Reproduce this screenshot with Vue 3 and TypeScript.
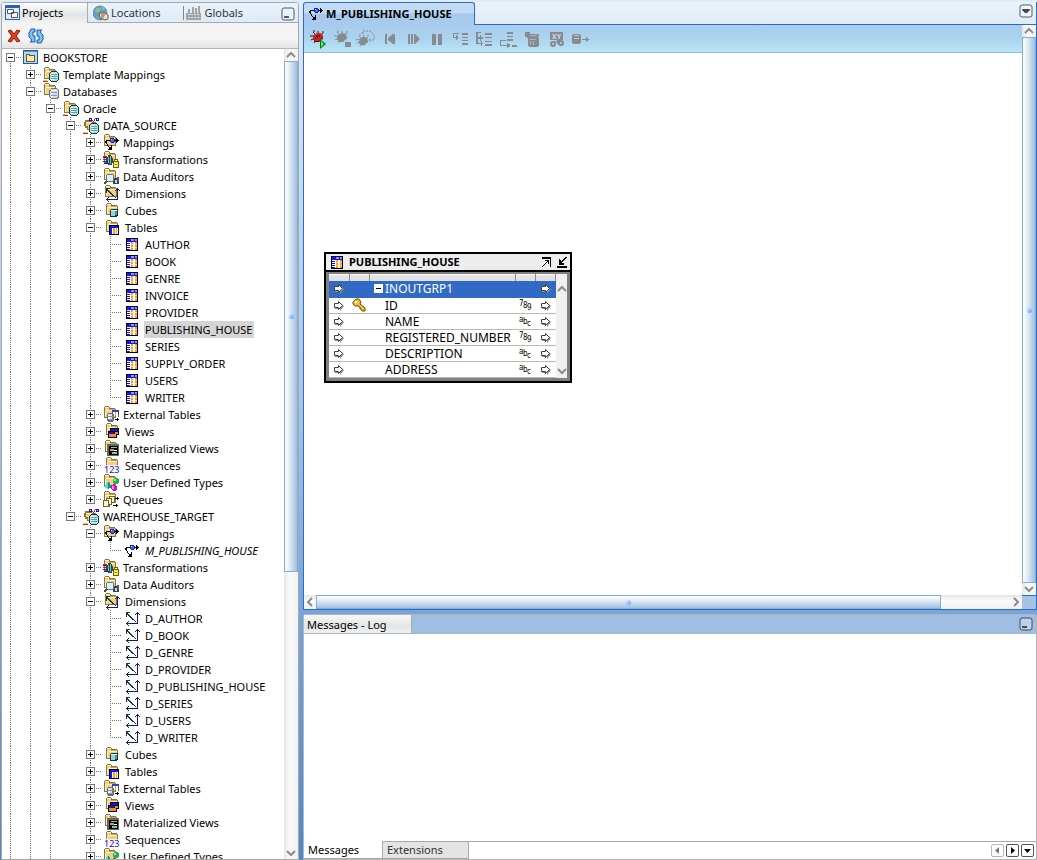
<script setup lang="ts">
import { computed, reactive, ref } from 'vue'

interface TreeNode {
  label: string
  icon: string
  children?: TreeNode[]
  open?: boolean
  more?: boolean
  narrow?: boolean
  italic?: boolean
}

interface TreeRow {
  key: string
  node: TreeNode
  guides: boolean[]
  first: boolean
  continues: boolean
}

const tableNames = ['AUTHOR', 'BOOK', 'GENRE', 'INVOICE', 'PROVIDER', 'PUBLISHING_HOUSE', 'SERIES', 'SUPPLY_ORDER', 'USERS', 'WRITER']
const dimensionNames = ['D_AUTHOR', 'D_BOOK', 'D_GENRE', 'D_PROVIDER', 'D_PUBLISHING_HOUSE', 'D_SERIES', 'D_USERS', 'D_WRITER']

function moduleFolders(mappings: string[], dimensions: string[], tables: string[]): TreeNode[] {
  return [
    { label: 'Mappings', icon: 'mappings', open: mappings.length > 0, children: mappings.map((label) => ({ label, icon: 'mapping', narrow: true, italic: true })) },
    { label: 'Transformations', icon: 'transformations', children: [] },
    { label: 'Data Auditors', icon: 'auditors', children: [] },
    { label: 'Dimensions', icon: 'dimensions', narrow: true, open: dimensions.length > 0, children: dimensions.map((label) => ({ label, icon: 'dimension', narrow: true })) },
    { label: 'Cubes', icon: 'cubes', narrow: true, children: [] },
    { label: 'Tables', icon: 'tables', narrow: true, open: tables.length > 0, children: tables.map((label) => ({ label, icon: 'table', narrow: true })) },
    { label: 'External Tables', icon: 'external', children: [] },
    { label: 'Views', icon: 'views', narrow: true, children: [] },
    { label: 'Materialized Views', icon: 'matviews', children: [] },
    { label: 'Sequences', icon: 'sequences', narrow: true, children: [] },
    { label: 'User Defined Types', icon: 'types', children: [] },
    { label: 'Queues', icon: 'queues', children: [] },
  ]
}

const projects = reactive<TreeNode[]>([
  {
    label: 'BOOKSTORE', icon: 'project', open: true, more: true,
    children: [
      { label: 'Template Mappings', icon: 'templates', children: [] },
      {
        label: 'Databases', icon: 'databases', open: true, more: true,
        children: [
          {
            label: 'Oracle', icon: 'templates', open: true, more: true,
            children: [
              { label: 'DATA_SOURCE', icon: 'module', open: true, children: moduleFolders([], [], tableNames) },
              { label: 'WAREHOUSE_TARGET', icon: 'module', open: true, children: moduleFolders(['M_PUBLISHING_HOUSE'], dimensionNames, []) },
            ],
          },
        ],
      },
    ],
  },
])

function flatten(nodes: TreeNode[], guides: boolean[], path: string): TreeRow[] {
  return nodes.flatMap((node, index) => {
    const continues = index < nodes.length - 1 || !!node.more
    const key = `${path}/${node.label}`
    const row: TreeRow = { key, node, guides, first: index === 0 && guides.length === 0, continues }
    const below = node.open && node.children ? flatten(node.children, [...guides, continues], key) : []
    return [row, ...below]
  })
}

const rows = computed(() => flatten(projects, [], ''))
const selected = ref('/BOOKSTORE/Databases/Oracle/DATA_SOURCE/Tables/PUBLISHING_HOUSE')

const debugTools = [
  { icon: 'debug', label: 'Start debug' },
  { icon: 'stop', label: 'Stop debug' },
  { icon: 'restart', label: 'Reinitialize' },
  { icon: 'rewind', label: 'Reset' },
  { icon: 'resume', label: 'Resume' },
  { icon: 'pause', label: 'Pause' },
  { icon: 'stepinto', label: 'Step' },
  { icon: 'stepover', label: 'Step row' },
  { icon: 'stepend', label: 'Step to end' },
  { icon: 'testdata', label: 'Test data' },
  { icon: 'watch', label: 'Watch' },
  { icon: 'output', label: 'Output' },
]

const attributes = [
  { name: 'ID', type: '789', key: true },
  { name: 'NAME', type: 'abc', key: false },
  { name: 'REGISTERED_NUMBER', type: '789', key: false },
  { name: 'DESCRIPTION', type: 'abc', key: false },
  { name: 'ADDRESS', type: 'abc', key: false },
]
</script>

<template>
  <div class="workbench">
    <svg class="sprite" aria-hidden="true">
      <symbol id="folder" viewBox="0 0 14 13">
        <path fill="#8c7434" d="M2 0h4v1h1v1h5v1h1v9H1V1h1z" />
        <path fill="#f4cf83" d="M2 2h4v1h6v8H2z" />
        <path fill="#fff3cc" d="M2 1h4v1H2zM3 4h9v1H3zM2 5h1v6H2z" />
        <path fill="#c9a050" d="M6 3h6v1H6z" />
      </symbol>
      <symbol id="cylinder" viewBox="0 0 10 11">
        <path fill="#17373b" d="M2 0h6v1h1v1h1v7H9v1H8v1H2v-1H1V9H0V2h1V1h1z" />
        <path fill="#a9e6e2" d="M2 1h6v1h1v7H8v1H2V9H1V2h1z" />
        <path fill="#effffe" d="M2 2h4v1H2zM2 4h3v1H2zM2 6h3v1H2zM2 8h3v1H2z" />
        <path fill="#5aa3a6" d="M2 3h6v1H2zM2 5h6v1H2zM2 7h6v1H2z" />
      </symbol>
      <symbol id="grid" viewBox="0 0 12 13">
        <path fill="#000" d="M0 0h12v13H0z" />
        <path fill="#1414ff" d="M1 1h3v3H1z" />
        <path fill="#8c94ff" d="M5 1h3v2H5zM9 1h2v2H9z" />
        <path fill="#1414ff" d="M4 1h1v3H4zM8 1h1v3H8zM5 3h6v1H5z" />
        <path fill="#fff" d="M1 4h10v8H1z" />
        <path fill="#1414ff" d="M1 5h3v1H1zM1 7h3v1H1zM1 9h3v1H1zM1 11h3v1H1z" />
        <path fill="#ff9a1f" d="M5 4h2v8H5zM9 4h2v8H9z" />
        <path fill="#ffd596" d="M5 6h2v1H5zM5 9h2v1H5zM9 6h2v1H9zM9 9h2v1H9z" />
      </symbol>
      <symbol id="flow" viewBox="0 0 15 14">
        <path fill="#000" d="M1 3h4v1H1zM0 4h2v2H0zM1 6h1v1H1zM2 7h1v2H2zM3 9h1v1H3zM4 10h1v1H4zM6 8h1v5H3v-1h1v-1h1v-1h1zM9 3h2V1h1v1h1v1h1v1h-1v1h-1v1h-1V4H9z" />
        <path fill="#0b23b8" d="M5 1h4v1h1v3H9v1H6V5H5z" />
        <path fill="#3c62ff" d="M6 2h3v3H6z" /><path fill="#e4eaff" d="M6 2h1v1H6z" />
      </symbol>
      <symbol id="axes" viewBox="0 0 15 15">
        <path fill="#12128c" d="M12 1h1v12H1v-1h11zM11 2h3v1h-3zM10 3h1v1h-1zM14 3h1v1h-1zM2 11h1v3H2zM3 10h1v1H3zM3 14h1v1H3z" />
        <path fill="#103c3c" d="M1 1h4v1H3v1h1v1h1v1h1v1h1v1h1v1h1v1h1v1h1v1h-1v-1H9v-1H8V9H7V8H6V7H5V6H4V5H3V4H2v2H1z" />
      </symbol>
      <symbol id="bug" viewBox="0 0 15 15">
        <path fill="none" stroke="currentColor" d="M3 2l3 3M8 1v4M0 6h4M1 10l4-2M4 13l2-3M9 12l-1-3M13 9l-4-2M13 3l-3 3M3 1h2M12 2h2" />
        <path fill="currentColor" d="M4 5l4-2 4 1 1 4-4 4H5L3 9z" />
      </symbol>

      <symbol id="project" viewBox="0 0 17 17">
        <path fill="#1f58ad" d="M0 1h15v14H0z" /><path fill="#b9d5f8" d="M1 3h13v11H1z" /><path fill="#5b93e4" d="M1 2h13v1H1z" />
        <path fill="#6a5a20" d="M3 5h4v1h5v7H3z" /><path fill="#ffeb9a" d="M4 6h2v1h5v5H4z" />
      </symbol>
      <symbol id="templates" viewBox="0 0 17 17">
        <use href="#folder" x="0" y="1" width="14" height="13" /><use href="#cylinder" x="6" y="5" width="10" height="11" />
        <path fill="#fff" d="M0 13h5v3H0z" /><path fill="#e0104c" d="M0 15h5v1H0z" /><path fill="#ffcf22" d="M0 14h4v1H0z" />
      </symbol>
      <symbol id="databases" viewBox="0 0 17 17">
        <use href="#folder" x="0" y="0" width="14" height="13" />
        <path fill="#66707a" d="M8 5h6v1h1v1h1v8h-1v1H8v-1H7v-1H6V7h2z" /><path fill="#d6dee8" d="M8 6h6v1h1v7h-1v1H8v-1H7V8h1z" />
        <path fill="#fff" d="M8 7h4v1H8zM8 10h2v1H8zM8 13h2v1H8z" /><path fill="#8796a8" d="M8 9h6v1H8zM8 12h6v1H8z" />
      </symbol>
      <symbol id="module" viewBox="0 0 17 17">
        <path fill="#8c7434" d="M2 3h7v2h4v4H9v4H4v-2H2V9H1V5h1z" /><path fill="#f4cf83" d="M3 5h6v4H7v3H5V9H3z" /><path fill="#fff3cc" d="M3 5h5v1H3z" />
        <path fill="#1010d0" d="M6 1h3v3H6zM13 1h3v3h-3z" /><path fill="#fff" d="M7 2h1v1H7zM14 2h1v1h-1z" /><path fill="#d81030" d="M9 3h1v1H9zM10 4h1v2h-1zM11 2h1v2h-1zM12 1h1v1h-1z" />
        <use href="#cylinder" x="6" y="6" width="10" height="11" />
        <path fill="#e0104c" d="M0 16h5v1H0z" /><path fill="#ffcf22" d="M0 15h5v1H0z" />
      </symbol>
      <symbol id="mappings" viewBox="0 0 17 17">
        <use href="#folder" x="0" y="0" width="14" height="13" /><use href="#flow" x="2" y="3" width="15" height="14" />
      </symbol>
      <symbol id="transformations" viewBox="0 0 17 17">
        <use href="#folder" x="0" y="0" width="14" height="13" />
        <path fill="#d41a2a" d="M0 5h4v1H0zM0 8h4v1H0z" /><path fill="#1515c8" d="M0 6h4v1H0zM0 10h4v1H0zM1 12h4v1H1z" />
        <path fill="#24484c" d="M5 4h3v1h1v2h1v5H9v2H5v-2H3V6h2z" /><path fill="#7fbcbc" d="M5 6h1v6H5zM7 5h1v8H7z" />
        <path fill="#6a5c10" d="M11 8h4v2h1v7h-6v-7h1z" /><path fill="#fff" d="M12 9h2v1h-2z" /><path fill="#ffee3a" d="M11 11h4v5h-4z" /><path fill="#8a7600" d="M12 13h2v1h-2z" />
      </symbol>
      <symbol id="auditors" viewBox="0 0 17 17">
        <use href="#folder" x="0" y="0" width="14" height="13" />
        <path fill="#35424c" d="M10 10h6v6h-6z" /><path fill="#c7d4dc" d="M12 12h2v3h-2z" /><path fill="#4a4f8c" d="M14 9h2v5h-2z" />
        <circle cx="7" cy="10" r="4" fill="#d6f3fb" stroke="#68757c" /><path stroke="#4b4b4b" stroke-width="2" d="M4 13l-3 3" />
      </symbol>
      <symbol id="dimensions" viewBox="0 0 17 17">
        <use href="#folder" x="1" y="0" width="14" height="13" /><use href="#axes" x="2" y="2" width="15" height="15" />
      </symbol>
      <symbol id="cubes" viewBox="0 0 17 17">
        <use href="#folder" x="2" y="1" width="14" height="13" />
        <path fill="#14343a" d="M8 7h7v7h-1v1H7V8h1z" /><path fill="#8ed6d8" d="M8 9h4v5H8z" /><path fill="#e0ffff" d="M8 8h6v1H8z" /><path fill="#4b9aa0" d="M12 9h2v4h-2z" />
      </symbol>
      <symbol id="tables" viewBox="0 0 17 17">
        <use href="#folder" x="2" y="1" width="14" height="13" /><path d="M6 6h10v10H6z" />
        <path fill="#1414ff" d="M7 7h8v2H7zM7 9h2v6H7z" /><path fill="#fff" d="M9 9h6v6H9z" /><path fill="#ff9a1f" d="M10 9h2v6h-2zM13 9h1v6h-1z" />
      </symbol>
      <symbol id="external" viewBox="0 0 17 17">
        <use href="#folder" x="0" y="0" width="14" height="13" />
        <path fill="#fff" d="M10 4h6v6h-6z" /><path fill="#2848b8" d="M9 4h7v2H9zM9 6h1v4H9z" /><path fill="#f0a030" d="M12 6h1v4h-1z" /><path fill="#555" d="M15 6h1v5h-1z" />
        <path fill="#66707a" d="M5 7h5v1h1v7h-1v1H5v-1H4V8h1z" /><path fill="#d6dee8" d="M5 8h4v6H5z" /><path fill="#fff" d="M5 9h2v5H5z" /><path fill="#8796a8" d="M5 10h5v1H5zM5 13h5v1H5z" />
        <path d="M12 13h2v-1h1v1h1v1h-1v1h-1v-1h-2z" />
      </symbol>
      <symbol id="views" viewBox="0 0 17 17">
        <use href="#folder" x="2" y="0" width="14" height="13" />
        <path d="M7 5h9v7h-2v3H5V8h2z" /><path fill="#1414e8" d="M8 6h7v2H8z" /><path fill="#ff8a10" d="M12 9h3v2h-3z" /><path fill="#1414e8" d="M6 9h5v2H6z" /><path fill="#ff8a10" d="M6 11h7v3H6z" />
      </symbol>
      <symbol id="matviews" viewBox="0 0 17 17">
        <use href="#folder" x="1" y="0" width="14" height="13" />
        <path fill="#666" d="M4 4h12v12H4z" /><path d="M6 6h9v9H6z" /><path fill="#56d6cf" d="M8 7h6v1H8zM9 12h5v2H9z" /><path fill="#ff8a10" d="M7 9h4v2H7z" /><path fill="#fff" d="M11 10h3v1h-3z" />
      </symbol>
      <symbol id="sequences" viewBox="0 0 17 17">
        <use href="#folder" x="2" y="0" width="14" height="13" /><path fill="#fff" fill-opacity=".8" d="M1 8h15v8H1z" />
      </symbol>
      <symbol id="types" viewBox="0 0 17 17">
        <use href="#folder" x="0" y="0" width="14" height="13" />
        <path fill="#0a8f8c" d="M5 7l4 6-4 2-4-2z" /><path fill="#3fe2da" d="M5 7v8l-4-2z" />
        <circle cx="13" cy="7" r="3" fill="#24b04c" /><path fill="#96f0a4" d="M11 5h2v2h-2z" /><path fill="#c818b4" d="M8 11l3-1 3 2v4l-3 1-3-2z" /><path fill="#ff8af0" d="M9 12h2v3H9z" />
      </symbol>
      <symbol id="queues" viewBox="0 0 17 17">
        <use href="#folder" x="0" y="0" width="14" height="13" />
        <path fill="#6b6236" d="M6 5h6v7h-3v2H7v2H0V9h3V7h3z" /><path fill="#fff7cf" d="M7 6h4v5H9V7H7zM4 8h4v5H6V9H4zM1 10h4v5H1z" />
        <path d="M12 7h2V6h1v1h1v1h-1v1h-1V8h-2zM10 14h3v-1h1v1h1v1h-1v1h-1v-1h-3z" />
      </symbol>
      <symbol id="table" viewBox="0 0 17 17"><use href="#grid" x="3" y="2" width="12" height="13" /></symbol>
      <symbol id="mapping" viewBox="0 0 17 17"><use href="#flow" x="2" y="2" width="15" height="14" /></symbol>
      <symbol id="dimension" viewBox="0 0 17 17"><use href="#axes" x="2" y="1" width="15" height="15" /></symbol>

      <symbol id="debug" viewBox="0 0 20 20">
        <g color="#1c1c1c"><use href="#bug" x="2" y="1" width="15" height="15" /></g>
        <path fill="#e81818" d="M6 6l4-2 4 1 1 3-4 4H7L5 10z" /><path d="M8 6h1v1h1v2H9V8H8zM11 6h1v2h-1zM7 9h1v1H7z" />
        <path fill="#0a7a12" d="M12 10l6 5-6 5z" /><path fill="#5df060" d="M13 12l3 3-3 3z" />
      </symbol>
      <symbol id="stop" viewBox="0 0 20 20"><use href="#bug" x="2" y="1" width="15" height="15" /><path fill="currentColor" d="M13 13h6v5h-6z" /></symbol>
      <symbol id="restart" viewBox="0 0 20 20"><use href="#bug" x="0" y="5" width="14" height="14" /><path fill="none" stroke="currentColor" stroke-dasharray="2 1" d="M7 5V2h7l4 4v5h-5M7 5l-2-2M13 11l2-2M13 11l2 2" /></symbol>
      <symbol id="rewind" viewBox="0 0 20 20"><path fill="currentColor" d="M5 5h2v10H5zM15 5v10H13L8 11V9l5-4z" /></symbol>
      <symbol id="resume" viewBox="0 0 20 20"><path fill="currentColor" d="M4 5h2v10H4zM7 5h2v10H7zM10 5h1l5 5-5 5h-1z" /></symbol>
      <symbol id="pause" viewBox="0 0 20 20"><path fill="currentColor" d="M4 5h4v11H4zM10 5h4v11h-4z" /></symbol>
      <symbol id="stepinto" viewBox="0 0 20 20"><path fill="currentColor" d="M1 4h6v1H1zM1 5h1v4H1zM1 8h5v1H1zM4 6h1v5H4zM5 7h1v3H5zM10 4h6v2h-6zM10 8h6v1h-6zM10 11h6v1h-6zM10 14h6v2h-6z" /></symbol>
      <symbol id="stepover" viewBox="0 0 20 20"><path fill="currentColor" d="M0 3h5v1H0zM0 3h2v12H0zM1 8h6v2H1zM1 14h6v1H1zM4 6h1v6H4zM5 12h1v5H5zM9 4h7v2H9zM9 8h7v1H9zM9 12h7v1H9zM9 15h7v2H9z" /></symbol>
      <symbol id="stepend" viewBox="0 0 20 20"><path fill="currentColor" d="M7 3h6v2H7zM7 7h6v1H7zM7 10h6v2H7zM0 11h6v1H0zM0 11h1v6H0zM0 16h9v1H0zM7 14h1v5H7zM8 15h2v3H8zM12 16h5v2h-5z" /></symbol>
      <symbol id="testdata" viewBox="0 0 20 20"><path fill="currentColor" d="M1 3h5v2h9v3h-1v1h1v8h-1v1H5v-1H4V9H3V8H1z" /><path fill="#a9b4bd" d="M6 6h7v1H6zM6 10h6v1H6zM6 12h1v4H6zM9 12h1v4H9z" /></symbol>
      <symbol id="watch" viewBox="0 0 20 20"><path fill="currentColor" d="M2 3h13v8H2zM9 11h3v2h-1v2H9v-2H7v-1h2z" /><circle cx="5" cy="15" r="2" fill="none" stroke="currentColor" stroke-width="2" /><circle cx="13" cy="14" r="2" fill="none" stroke="currentColor" stroke-width="2" /></symbol>
      <symbol id="output" viewBox="0 0 20 20"><path fill="currentColor" d="M1 5h7v1h1v8H8v1H1v-1H0V6h1zM10 10h4V8h1v1h1v1h1v1h-1v1h-1v1h-1v-2h-4z" /><path fill="#b9cbd9" d="M2 6h5v1H2zM2 9h5v1H2z" /></symbol>
      <symbol id="port" viewBox="0 0 12 11"><path fill="#909090" d="M2 4h4V2l5 4-4 5V9H2z" /><path fill="#fff" stroke="#404040" d="M1.500 3.500h4v-2l4 4-4 4v-2h-4z" /></symbol>
      <symbol id="chevron" viewBox="0 0 10 10"><path fill="none" stroke="#8c8c8c" stroke-width="2" d="M1 7l4-4 4 4" /></symbol>
      <symbol id="minimize" viewBox="0 0 14 14"><rect x="1" y="1" width="12" height="12" rx="2" fill="#fff" fill-opacity=".3" stroke="currentColor" /><path fill="currentColor" d="M3 9h5v2H3z" /></symbol>
    </svg>

    <aside class="navigator">
      <nav class="nav-tabs">
        <button class="nav-tab active" type="button">
          <svg class="tab-icon" viewBox="0 0 16 16"><path fill="#2a62b4" d="M0 0h15v15H0z" /><path fill="#dfeafb" d="M1 3h13v11H1z" /><path fill="#fff" stroke="#555" d="M2.500 4.500h6v4h-6zM6.500 7.500h6v5h-6z" /></svg>
          Projects
        </button>
        <button class="nav-tab" type="button">
          <svg class="tab-icon" viewBox="0 0 16 16"><circle cx="7" cy="8" r="7" fill="#5c9ccf" stroke="#6d8ca8" /><path fill="#8cbc8c" d="M3 3h5l-1 4-3 1-2-2zM8 1l4 2-2 3zM3 11l3 1v2z" /><path fill="#f6ddc4" stroke="#765844" d="M6 8h6l3 2v4l-3 1-5-2z" /><path stroke="#765844" d="M8 10h4M8 12h3" /></svg>
          Locations
        </button>
        <button class="nav-tab globals" type="button">
          <svg class="tab-icon" viewBox="0 0 16 16"><path fill="#a4a4a4" d="M2 4h2v4H2zM6 2h2v6H6zM9 3h2v5H9zM12 1h2v7h-2zM0 8h15v7H0z" /><path fill="#e4e4e4" d="M2 9h2v1H2zM5 9h2v1H5zM8 9h2v1H8zM11 9h2v1h-2zM2 12h2v1H2zM5 12h2v1H5zM8 12h2v1H8zM11 12h2v1h-2z" /></svg>
          Globals
        </button>
        <button class="window-btn" type="button" aria-label="Minimize navigator"><svg><use href="#minimize" /></svg></button>
      </nav>
      <div class="nav-tools">
        <button type="button" aria-label="Delete"><svg viewBox="0 0 16 16"><path fill="#e8401f" stroke="#8e1a08" d="M2 3l3-1 3 4 3-4 3 1-4 5 4 5-3 1-3-4-3 4-3-1 4-5z" /></svg></button>
        <button type="button" aria-label="Refresh"><svg viewBox="0 0 16 16"><path fill="#7fc0f6" stroke="#175ca8" d="M1 5l2-4h4v3H5v4h2v6H2l2-2-3-3zM15 11l-2 4H9v-3h2V8H9V2h5l-2 2 3 3z" /></svg></button>
      </div>
      <div class="tree-area">
        <div class="tree" role="tree">
          <div v-for="row in rows" :key="row.key" class="tree-row" role="treeitem" :aria-level="row.guides.length + 1">
            <span v-for="(line, level) in row.guides" :key="level" class="cell"><i v-if="line" class="rail" /></span>
            <span class="cell">
              <i class="rail" :class="{ top: !row.continues, bottom: row.first }" />
              <i class="dash" />
              <button
                v-if="row.node.children"
                class="toggle"
                :class="{ open: row.node.open }"
                type="button"
                :aria-label="row.node.label"
                :aria-expanded="!!row.node.open"
                @click="row.node.open = !row.node.open"
              />
            </span>
            <svg class="node-icon" shape-rendering="crispEdges">
              <use :href="`#${row.node.icon}`" />
              <text v-if="row.node.icon === 'sequences'" class="digits" x="1" y="16">123</text>
            </svg>
            <span
              class="node-label"
              :class="{ narrow: row.node.narrow, italic: row.node.italic, selected: row.key === selected }"
              @click="selected = row.key"
            >{{ row.node.label }}</span>
          </div>
        </div>
        <div class="scroll vertical">
          <button type="button" aria-label="Scroll up"><svg><use href="#chevron" /></svg></button>
          <div class="track"><div class="thumb tree-thumb"><i class="grip" /></div></div>
          <button type="button" aria-label="Scroll down"><svg class="down"><use href="#chevron" /></svg></button>
        </div>
      </div>
    </aside>

    <main class="workspace">
      <section class="editor">
        <header class="editor-tabs">
          <button class="editor-tab" type="button"><svg shape-rendering="crispEdges"><use href="#flow" /></svg>M_PUBLISHING_HOUSE</button>
          <div class="tab-rest">
            <button class="window-btn" type="button" aria-label="Open documents">
              <svg viewBox="0 0 14 14"><rect x="1" y="1" width="12" height="12" rx="2" fill="#fff" fill-opacity=".5" stroke="#555b64" /><path fill="#45484e" d="M3 5h8v1l-3 3H6L3 6z" /></svg>
            </button>
          </div>
        </header>
        <div class="editor-body">
          <div class="editor-view">
            <div class="debug-bar">
              <button v-for="tool in debugTools" :key="tool.icon" type="button" :aria-label="tool.label">
                <svg>
                  <use :href="`#${tool.icon}`" />
                  <text v-if="tool.icon === 'watch'" class="xy" x="4" y="10">XY</text>
                </svg>
              </button>
            </div>
            <div class="canvas">
              <article class="operator">
                <header class="operator-title">
                  <svg class="grid-icon" shape-rendering="crispEdges"><use href="#grid" /></svg>
                  <h2>PUBLISHING_HOUSE</h2>
                  <button type="button" aria-label="Maximize"><svg viewBox="0 0 12 12" shape-rendering="crispEdges"><path d="M1 1h9v10H9V3H1zM4 4h4v4H7V6H6v1H5v1H4v1H3v1H2v1H1v-1h1V9h1V8h1V7h1V6h1V5H4z" /></svg></button>
                  <button type="button" aria-label="Restore"><svg viewBox="0 0 12 12" shape-rendering="crispEdges"><path d="M1 10h10v2H1zM3 3h1v1h1v1h1V4h1V3h1V2h1V1h2v1h-1v1H9v1H8v1H7v1H6v1h2v2H3z" /></svg></button>
                </header>
                <div class="operator-body">
                  <table>
                    <colgroup><col class="c-port"><col class="c-key"><col><col class="c-type"><col class="c-port"></colgroup>
                    <thead><tr><th /><th /><th /><th /><th /></tr></thead>
                    <tbody>
                      <tr class="group">
                        <td><svg class="port"><use href="#port" /></svg></td>
                        <td />
                        <td class="name"><button class="group-toggle" type="button" aria-label="Collapse group" />INOUTGRP1</td>
                        <td />
                        <td><svg class="port"><use href="#port" /></svg></td>
                      </tr>
                      <tr v-for="attr in attributes" :key="attr.name">
                        <td><svg class="port"><use href="#port" /></svg></td>
                        <td>
                          <svg v-if="attr.key" class="key" viewBox="0 0 14 14"><path fill="#f2c230" stroke="#6b4a08" d="M1 4l3-3h3l2 3-1 2 5 4v3h-3l-1-2H8V9L6 8H3L1 6z" /><path fill="#fff" d="M3 3h2v2H3z" /></svg>
                        </td>
                        <td class="name">{{ attr.name }}</td>
                        <td>
                          <svg class="type" viewBox="0 0 13 12"><text x="0" y="7">{{ attr.type[0] }}</text><text x="4" y="9">{{ attr.type[1] }}</text><text x="8" y="11">{{ attr.type[2] }}</text></svg>
                        </td>
                        <td><svg class="port"><use href="#port" /></svg></td>
                      </tr>
                    </tbody>
                  </table>
                  <div class="operator-scroll"><svg><use href="#chevron" /></svg><svg class="down"><use href="#chevron" /></svg></div>
                </div>
              </article>
            </div>
          </div>
          <div class="scroll vertical">
            <button type="button" aria-label="Scroll up"><svg><use href="#chevron" /></svg></button>
            <div class="track"><div class="thumb full"><i class="grip" /></div></div>
            <button type="button" aria-label="Scroll down"><svg class="down"><use href="#chevron" /></svg></button>
          </div>
          <div class="scroll horizontal">
            <button type="button" aria-label="Scroll left"><svg class="left"><use href="#chevron" /></svg></button>
            <div class="track"><div class="thumb wide"><i class="grip" /></div></div>
            <button type="button" aria-label="Scroll right"><svg class="right"><use href="#chevron" /></svg></button>
          </div>
          <div class="corner" />
        </div>
      </section>

      <section class="messages">
        <header class="messages-head">
          <h2>Messages - Log</h2>
          <button class="window-btn" type="button" aria-label="Minimize messages"><svg><use href="#minimize" /></svg></button>
        </header>
        <div class="log" />
        <footer class="log-tabs">
          <button class="log-tab current" type="button">Messages</button>
          <button class="log-tab" type="button">Extensions</button>
          <div class="pager">
            <button type="button" aria-label="Previous tab"><svg viewBox="0 0 11 11"><path fill="#777" d="M7 2v7L3 5.500z" /></svg></button>
            <button class="on" type="button" aria-label="Next tab"><svg viewBox="0 0 11 11"><path d="M4 2v7l4-3.500z" /></svg></button>
            <button class="on" type="button" aria-label="Tab list"><svg viewBox="0 0 11 11"><path d="M2 4h7L5.500 8z" /></svg></button>
          </div>
        </footer>
      </section>
    </main>
  </div>
</template>

<style>
html, body { margin: 0; height: 100%; overflow: hidden; }
</style>

<style scoped>
.workbench, .workbench * { box-sizing: border-box; }
.workbench {
  display: grid;
  grid-template-columns: 298px minmax(0, 1fr);
  gap: 4px;
  height: 100vh;
  padding: 2px 0 0 1px;
  background: linear-gradient(#e0ebfa, #a8c6ea 45%, #78a6da 70%, #4f88c8);
  color: #000;
  font: 11px/16px "Noto Sans", sans-serif;
}
.sprite { position: absolute; width: 0; height: 0; }
button { margin: 0; padding: 0; border: 0; background: none; color: inherit; font: inherit; }
svg { display: block; flex: none; }
h2 { margin: 0; font-size: 11px; line-height: 16px; }

.navigator { display: flex; flex-direction: column; min-height: 0; border: 1px solid #a9a9a9; border-radius: 3px 3px 0 0; background: #fff; overflow: hidden; }
.nav-tabs { display: flex; flex: none; height: 20px; background: linear-gradient(#e9f3fb, #dcebf8); }
.nav-tab { display: flex; align-items: center; gap: 2px; padding: 0 5px; border-bottom: 1px solid #aaa; color: #333; }
.nav-tab.active { width: 86px; padding-left: 3px; gap: 1px; border-right: 1px solid #aaa; border-bottom: 0; background: linear-gradient(#fdfdfd, #e2e5e5 60%, #f2f2f2); color: #000; }
.nav-tab.globals { flex: 1; margin-left: 0; padding-left: 18px; }
.nav-tab.globals::before { content: ""; width: 1px; height: 14px; background: #888; }
.tab-icon { width: 16px; height: 16px; }
.nav-tabs .window-btn { padding: 2px 3px 0 0; border-bottom: 1px solid #aaa; color: #555b64; }
.window-btn svg { width: 14px; height: 14px; }
.nav-tools { display: flex; flex: none; align-items: center; gap: 6px; height: 26px; padding: 0 4px; border-bottom: 1px solid #b5b5b5; background: linear-gradient(#f3f3f3, #f5f5f5 60%, #e4e4e4); }
.nav-tools svg { width: 16px; height: 16px; }

.tree-area { display: flex; flex: 1; min-height: 0; }
.tree { flex: 1; min-width: 0; overflow: hidden; }
.tree-row { display: flex; height: 17px; white-space: nowrap; }
.cell { position: relative; flex: none; width: 20px; }
.rail { position: absolute; top: 0; bottom: 0; left: 8px; width: 1px; background: repeating-linear-gradient(#777 0 1px, transparent 1px 2px); }
.rail.top { bottom: 8px; }
.rail.bottom { top: 8px; }
.dash { position: absolute; top: 8px; left: 8px; right: 0; height: 1px; background: repeating-linear-gradient(90deg, #777 0 1px, transparent 1px 2px); }
.toggle { position: absolute; top: 4px; left: 4px; width: 9px; height: 9px; border: 1px solid #777; background: linear-gradient(#000, #000) center / 5px 1px no-repeat, linear-gradient(#000, #000) center / 1px 5px no-repeat, #fff; }
.toggle.open { background: linear-gradient(#000, #000) center / 5px 1px no-repeat, #fff; }
.node-icon { width: 17px; height: 17px; margin-left: 1px; overflow: visible; }
.digits { fill: #1010d8; font: 9px "Noto Sans", sans-serif; }
.node-label { margin-left: 2px; padding: 0 2px 0 1px; line-height: 17px; cursor: default; }
.node-label.narrow { margin-left: 4px; }
.node-label.italic { font-style: italic; }
.node-label.selected { background: #d5d5d5; }

.scroll { display: flex; background: #f4f4f4; }
.scroll.vertical { flex-direction: column; width: 14px; background: linear-gradient(90deg, #e6e6e6, #fafafa 40%, #f1f1f1); }
.scroll.horizontal { height: 14px; background: linear-gradient(#e6e6e6, #fafafa 40%, #f1f1f1); }
.scroll button { display: grid; place-items: center; flex: none; width: 12px; height: 12px; }
.scroll.vertical button { width: 13px; }
.scroll.horizontal button { height: 13px; }
.scroll svg, .operator-scroll svg { width: 10px; height: 10px; }
.down { transform: rotate(180deg); }
.left { transform: rotate(-90deg); }
.right { transform: rotate(90deg); }
.track { display: flex; flex: 1; min-width: 0; min-height: 0; }
.thumb { display: grid; place-items: center; border: 1px solid #83acd8; }
.vertical .track { flex-direction: column; }
.vertical .thumb { width: 14px; background: linear-gradient(90deg, #fff, #e4edf5 35%, #9fc0e0); }
.horizontal .thumb { height: 14px; background: linear-gradient(#fff, #e4edf5 35%, #9fc0e0); }
.tree-thumb { height: 65%; }
.thumb.full { height: 100%; }
.thumb.wide { width: 90%; }
.grip { width: 5px; height: 5px; border-radius: 50%; background: linear-gradient(135deg, #d6e8ff, #629cf4); }

.workspace { display: grid; grid-template-rows: minmax(0, 608fr) minmax(0, 246fr); gap: 4px; min-width: 0; min-height: 0; }
.editor { display: flex; flex-direction: column; min-height: 0; border: 1px solid #2d6bc4; border-top: 0; background: #fff; }
.editor-tabs { display: flex; flex: none; height: 23px; margin-left: -1px; background: linear-gradient(#eaf3fa, #dfebf7); }
.editor-tab { display: flex; align-items: center; gap: 2px; width: 172px; padding-left: 5px; border: 1px solid #2d6bc4; border-bottom: 0; border-radius: 3px 3px 0 0; background: linear-gradient(#c2daf4 45%, #a6c8ec 50%, #a9cbee); font-weight: 700; }
.editor-tab svg { width: 15px; height: 14px; }
.tab-rest { display: flex; flex: 1; justify-content: flex-end; align-items: flex-start; padding: 2px 3px 0 0; border-bottom: 1px solid #2d6bc4; }
.editor-body { display: grid; flex: 1; grid-template: minmax(0, 1fr) 14px / minmax(0, 1fr) 14px; min-height: 0; }
.editor-view { display: flex; flex-direction: column; min-width: 0; min-height: 0; }
.debug-bar { display: flex; flex: none; align-items: center; height: 28px; padding-left: 2px; border-bottom: 1px solid #91bfe4; background: linear-gradient(#a9cbed, #acd3ee 50%, #b9e5f5); color: #858b90; }
.debug-bar button { display: grid; place-items: center; width: 24px; height: 24px; }
.debug-bar svg { width: 20px; height: 20px; }
.xy { fill: #cfdde8; font: 700 7px "Noto Sans", sans-serif; }
.canvas { position: relative; flex: 1; overflow: hidden; background: #fff; }
.corner { border-top: 1px solid #2d6bc4; background: #a5c3e6; }

.operator { position: absolute; top: 199px; left: 20px; width: 248px; border: 2px solid #000; background: #fff; }
.operator-title { display: flex; align-items: center; gap: 3px; height: 18px; padding: 0 2px 0 5px; border-bottom: 2px solid #000; background: #ededed; }
.operator-title h2 { flex: 1; margin-left: 3px; }
.grid-icon { width: 12px; height: 13px; }
.operator-title button svg { width: 12px; height: 12px; }
.operator-body { display: flex; border: 3px solid #808080; border-top-width: 2px; }
table { flex: 1; min-width: 0; border-collapse: collapse; table-layout: fixed; font-size: 12px; line-height: 15px; }
.c-port, .c-key, .c-type { width: 20px; }
th { height: 7px; padding: 0; border-right: 1px solid #8c8c8c; background: linear-gradient(#fff, #e2e2e2 30%); }
td { height: 16px; padding: 0; border-bottom: 1px solid #b8b8ae; }
td svg { margin: 0 auto; }
.name { position: relative; padding-left: 16px; overflow: visible; white-space: nowrap; }
.group td { border-color: #316ac5; background: #316ac5; color: #fff; }
.group-toggle { position: absolute; top: 3px; left: 5px; width: 9px; height: 9px; background: linear-gradient(#000, #000) center / 5px 1px no-repeat, #fff; }
.port { width: 12px; height: 11px; }
.key { width: 14px; height: 14px; }
.type { width: 13px; height: 12px; overflow: visible; }
.type text { font: 8px "DejaVu Sans Condensed", "DejaVu Sans", sans-serif; }
.operator-scroll { display: flex; flex-direction: column; justify-content: space-between; align-items: center; flex: none; width: 11px; padding: 10px 0 2px; background: #f0f0f0; }

.messages { display: flex; flex-direction: column; min-height: 0; border: 1px solid #b5b5b5; border-radius: 3px 3px 0 0; background: #fff; }
.messages-head { display: flex; flex: none; justify-content: space-between; height: 19px; border-bottom: 1px solid #a9b5c2; background: #a0bee4; color: #404d60; }
.messages-head h2 { width: 108px; padding: 2px 0 0 3px; border-right: 1px solid #aaa; background: linear-gradient(#f8f8f8, #e3e6e6 60%, #f0f0f0); color: #000; font-weight: 400; }
.messages-head .window-btn { align-self: flex-start; padding: 2px 3px 0 0; }
.log { flex: 1; }
.log-tabs { display: flex; flex: none; height: 18px; }
.log-tab { padding: 0 4px; text-align: left; border-bottom: 1px solid #aaa; }
.log-tab.current { width: 78px; }
.log-tab:not(.current) { width: 87px; border: 1px solid #aaa; background: #e4e4e4; color: #333; }
.pager { display: flex; flex: 1; justify-content: flex-end; align-items: center; gap: 2px; padding-right: 2px; border-top: 1px solid #aaa; }
.pager button { width: 13px; height: 13px; border: 1px solid #b8b8b8; border-radius: 2px; }
.pager .on { border-color: #555; }
.pager svg { width: 11px; height: 11px; }
</style>
